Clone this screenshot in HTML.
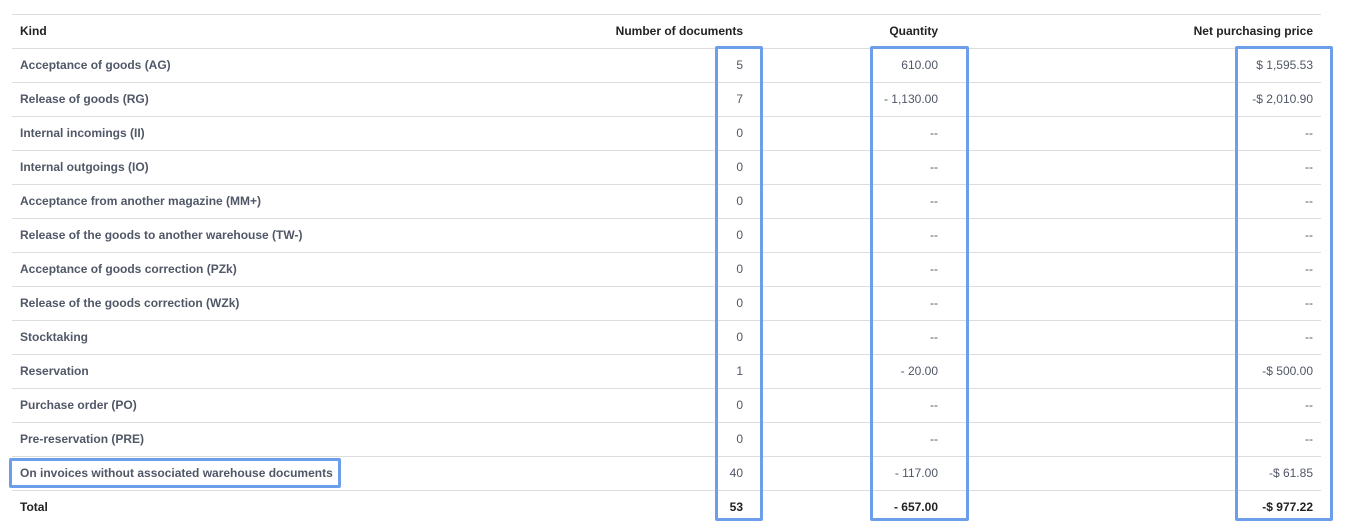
<!DOCTYPE html>
<html><head><style>
body{margin:0;width:1347px;height:528px;background:#fff;font-family:"Liberation Sans",Arial,sans-serif;font-size:12px;position:relative;overflow:hidden}
.row{position:absolute;left:12px;width:1309px;height:34px;border-top:1px solid #ddd;box-sizing:border-box}
.c{position:absolute;top:9px;white-space:nowrap}
.k{left:8px;font-weight:bold;color:#505766}
.n{right:578px;color:#505766}
.q{right:383px;color:#505766}
.p{right:8px;color:#505766}
.h .c{color:#222;font-weight:bold}
.t .c{color:#222;font-weight:bold}
.box{position:absolute;border:3px solid #6d9eeb;box-sizing:border-box;border-radius:2px}
</style></head><body>
<div class="row h" style="top:14px"><span class="c k">Kind</span><span class="c n">Number of documents</span><span class="c q">Quantity</span><span class="c p">Net purchasing price</span></div>
<div class="row" style="top:48px"><span class="c k">Acceptance of goods (AG)</span><span class="c n">5</span><span class="c q">610.00</span><span class="c p">$ 1,595.53</span></div>
<div class="row" style="top:82px"><span class="c k">Release of goods (RG)</span><span class="c n">7</span><span class="c q">- 1,130.00</span><span class="c p">-$ 2,010.90</span></div>
<div class="row" style="top:116px"><span class="c k">Internal incomings (II)</span><span class="c n">0</span><span class="c q">--</span><span class="c p">--</span></div>
<div class="row" style="top:150px"><span class="c k">Internal outgoings (IO)</span><span class="c n">0</span><span class="c q">--</span><span class="c p">--</span></div>
<div class="row" style="top:184px"><span class="c k">Acceptance from another magazine (MM+)</span><span class="c n">0</span><span class="c q">--</span><span class="c p">--</span></div>
<div class="row" style="top:218px"><span class="c k">Release of the goods to another warehouse (TW-)</span><span class="c n">0</span><span class="c q">--</span><span class="c p">--</span></div>
<div class="row" style="top:252px"><span class="c k">Acceptance of goods correction (PZk)</span><span class="c n">0</span><span class="c q">--</span><span class="c p">--</span></div>
<div class="row" style="top:286px"><span class="c k">Release of the goods correction (WZk)</span><span class="c n">0</span><span class="c q">--</span><span class="c p">--</span></div>
<div class="row" style="top:320px"><span class="c k">Stocktaking</span><span class="c n">0</span><span class="c q">--</span><span class="c p">--</span></div>
<div class="row" style="top:354px"><span class="c k">Reservation</span><span class="c n">1</span><span class="c q">- 20.00</span><span class="c p">-$ 500.00</span></div>
<div class="row" style="top:388px"><span class="c k">Purchase order (PO)</span><span class="c n">0</span><span class="c q">--</span><span class="c p">--</span></div>
<div class="row" style="top:422px"><span class="c k">Pre-reservation (PRE)</span><span class="c n">0</span><span class="c q">--</span><span class="c p">--</span></div>
<div class="row" style="top:456px"><span class="c k">On invoices without associated warehouse documents</span><span class="c n">40</span><span class="c q">- 117.00</span><span class="c p">-$ 61.85</span></div>
<div class="row t" style="top:490px"><span class="c k">Total</span><span class="c n">53</span><span class="c q">- 657.00</span><span class="c p">-$ 977.22</span></div>
<div class="box" style="left:715px;top:46px;width:48px;height:475px"></div>
<div class="box" style="left:870px;top:46px;width:99px;height:475px"></div>
<div class="box" style="left:1235px;top:46px;width:98px;height:475px"></div>
<div class="box" style="left:9px;top:458px;width:332px;height:30px"></div>
</body></html>
